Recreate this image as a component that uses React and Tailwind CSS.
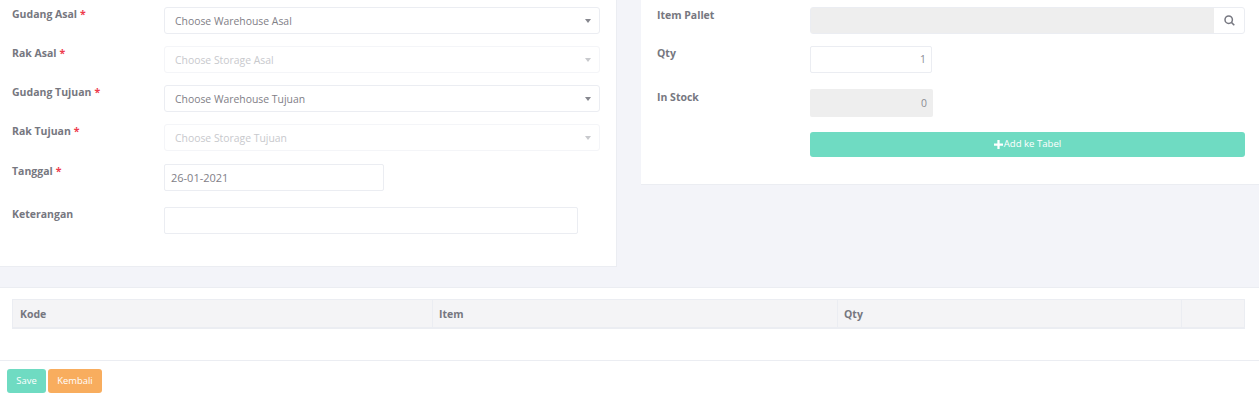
const font = { fontFamily: '"Open Sans", sans-serif' };

function Label({ text, required, up }) {
  return (
    <div className={`w-[152px] shrink-0 text-[10.5px] leading-[16px] font-bold text-[#767780] ${up ? "-mt-[1px]" : ""}`}>
      {text}
      {required && <span className="ml-[3px] text-[#ee3b4c]">*</span>}
    </div>
  );
}

function Select({ text, disabled }) {
  return (
    <div className={`flex h-[27px] flex-1 items-center justify-between rounded-[3px] border pl-[10px] pr-[8px] text-[10.4px] ${disabled ? "border-[#f4f5f8] text-[#c8c9cd]" : "border-[#ebedf2] text-[#7f8087]"}`}>
      <span className="pt-[2px]">{text}</span>
      <svg width="6" height="4" viewBox="0 0 6 4">
        <path d="M0 0H6L3 4Z" fill={disabled ? "#c8c9cd" : "#86878e"} />
      </svg>
    </div>
  );
}

export default function App() {
  return (
    <div className="h-[400px] w-[1259px] overflow-hidden bg-white" style={font}>
      <div className="flex h-[288px] items-start justify-between border-b border-[#ebedf2] bg-[#f3f4f9]">
        <div className="flex h-[267px] w-[617px] flex-col border-r border-b border-[#ebedf2] bg-white pl-[12px] pr-[16px] pt-[7px]">
          <div className="flex"><Label up text="Gudang Asal" required /><Select text="Choose Warehouse Asal" /></div>
          <div className="mt-[12px] flex"><Label up text="Rak Asal" required /><Select text="Choose Storage Asal" disabled /></div>
          <div className="mt-[12px] flex"><Label up text="Gudang Tujuan" required /><Select text="Choose Warehouse Tujuan" /></div>
          <div className="mt-[12px] flex"><Label up text="Rak Tujuan" required /><Select text="Choose Storage Tujuan" disabled /></div>
          <div className="mt-[13px] flex">
            <Label up text="Tanggal" required />
            <div className="flex h-[27px] w-[220px] items-center rounded-[2px] border border-[#ebedf2] pl-[6px] pt-[1px] text-[11px] text-[#7f8087]">26-01-2021</div>
          </div>
          <div className="mt-[16px] flex">
            <Label up text="Keterangan" />
            <div className="h-[27px] w-[414px] rounded-[2px] border border-[#ebedf2]"></div>
          </div>
        </div>
        <div className="flex h-[185px] w-[618px] flex-col border-b border-[#ebedf2] bg-white pl-[16px] pr-[14px] pt-[7px]">
          <div className="flex">
            <Label text="Item Pallet" />
            <div className="ml-[1px] flex h-[27px] flex-1 rounded-[3px] border border-[#ebedf2]">
              <div className="flex-1 bg-[#eeeeee]"></div>
              <div className="flex w-[30px] items-center justify-center">
                <svg width="11" height="11" viewBox="0 0 11 11" fill="none" stroke="#767780" strokeWidth="1.5">
                  <circle cx="4.7" cy="4.7" r="3.7" />
                  <path d="M7.4 7.4 10.3 10.3" />
                </svg>
              </div>
            </div>
          </div>
          <div className="mt-[12px] flex">
            <Label up text="Qty" />
            <div className="ml-[1px] flex h-[27px] w-[122px] items-center justify-end rounded-[2px] border border-[#ebedf2] pr-[5px] pt-[1px] text-[10.4px] text-[#8a8b92]">1</div>
          </div>
          <div className="mt-[16px] flex">
            <Label text="In Stock" />
            <div className="ml-[1px] flex h-[28px] w-[123px] items-center justify-end rounded-[2px] bg-[#eeeeee] pr-[6px] pt-[1px] text-[10.4px] text-[#8a8b92]">0</div>
          </div>
          <div className="mt-[15px] ml-[153px] flex h-[25px] items-center justify-center gap-[1px] rounded-[3px] bg-[#6fdbc2] text-[9.6px] text-white">
            <svg width="9" height="9" viewBox="0 0 8 8" fill="#fff"><path d="M3 0H5V3H8V5H5V8H3V5H0V3H3Z" /></svg>
            <span>Add ke Tabel</span>
          </div>
        </div>
      </div>
      <div className="pl-[12px] pr-[14px] pt-[11px]">
        <div className="flex h-[30px] items-center border border-b-2 border-[#ebedf2] bg-[#f4f4f6] text-[10.5px] font-bold text-[#767780]">
          <div className="flex h-full w-[420px] items-center border-r border-[#ebedf2] pl-[7px] pt-[2px]">Kode</div>
          <div className="flex h-full w-[405px] items-center border-r border-[#ebedf2] pl-[6px] pt-[2px]">Item</div>
          <div className="flex h-full w-[344px] items-center border-r border-[#ebedf2] pl-[6px] pt-[2px]">Qty</div>
          <div className="flex-1"></div>
        </div>
      </div>
      <div className="mt-[31px] flex gap-[2px] border-t border-[#ebedf2] pl-[7px] pt-[8px]">
        <div className="flex h-[24px] w-[39px] items-center justify-center rounded-[3px] bg-[#6fdbc2] text-[9.4px] text-white">Save</div>
        <div className="flex h-[24px] w-[54px] items-center justify-center rounded-[3px] bg-[#f8ad5e] text-[9.4px] text-white">Kembali</div>
      </div>
    </div>
  );
}
